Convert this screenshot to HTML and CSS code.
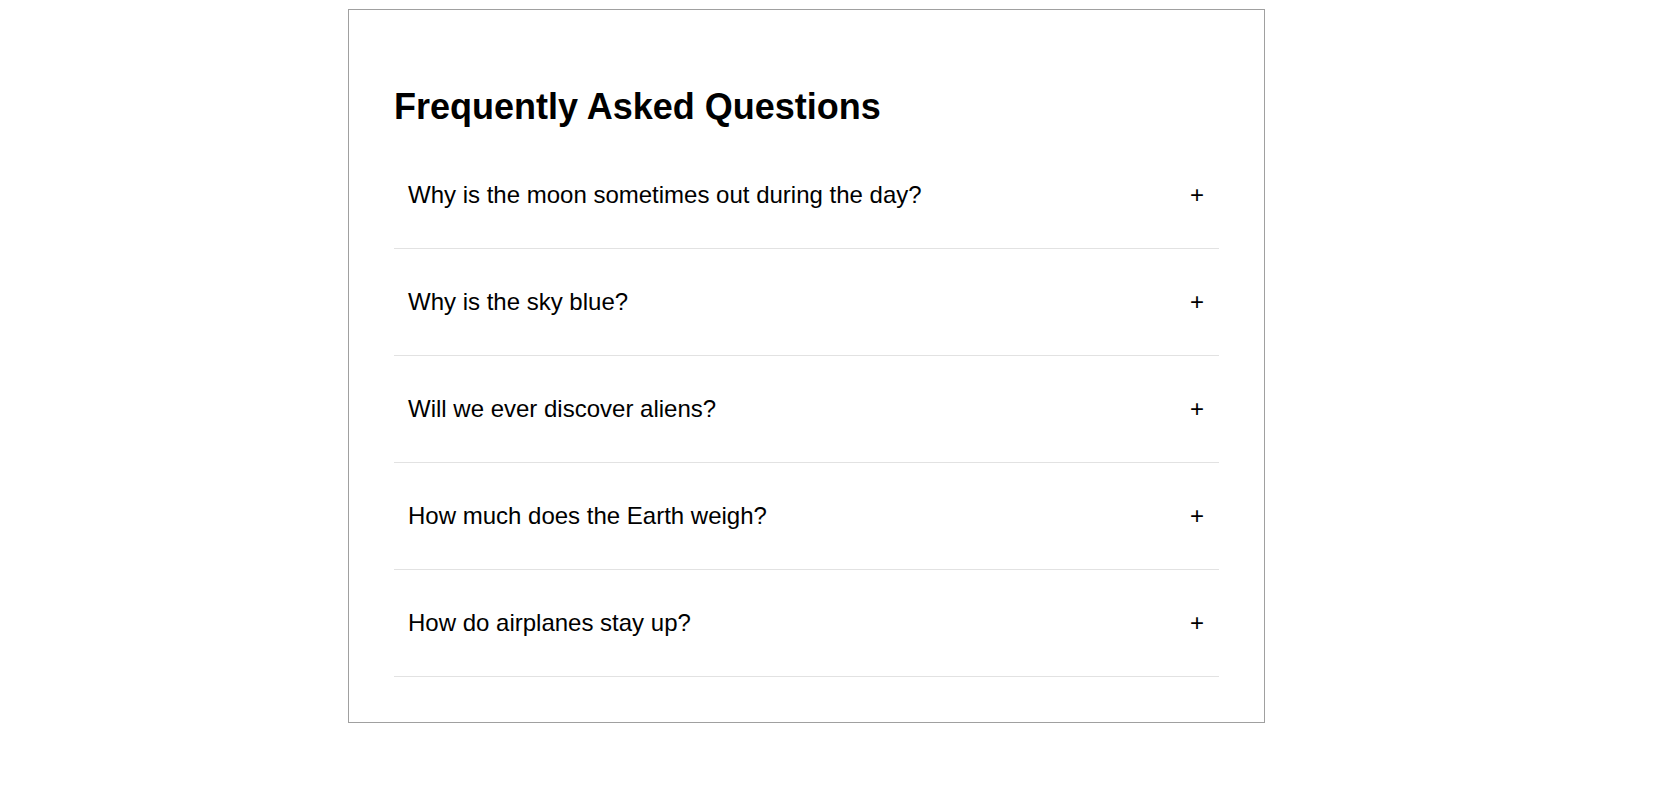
FILE: index.html
```html
<!DOCTYPE html>
<html lang="en">
<head>
<meta charset="utf-8">
<title>FAQ</title>
<link rel="stylesheet" href="styles.css">
</head>
<body>
<div class="page">
  <section class="faq">
    <h1 class="faq-title">Frequently Asked Questions</h1>
    <div class="faq-list">
      <div class="faq-item"><span class="faq-q">Why is the moon sometimes out during the day?</span><span class="faq-icon">+</span></div>
      <div class="faq-item"><span class="faq-q">Why is the sky blue?</span><span class="faq-icon">+</span></div>
      <div class="faq-item"><span class="faq-q">Will we ever discover aliens?</span><span class="faq-icon">+</span></div>
      <div class="faq-item"><span class="faq-q">How much does the Earth weigh?</span><span class="faq-icon">+</span></div>
      <div class="faq-item"><span class="faq-q">How do airplanes stay up?</span><span class="faq-icon">+</span></div>
    </div>
  </section>
</div>
</body>
</html>
```
FILE: styles.css
```css
html, body {
  margin: 0;
  padding: 0;
  background: #ffffff;
}
body {
  font-family: "Liberation Sans", Arial, sans-serif;
  color: #000;
}
.page {
  padding: 9px 0 0 348px;
}
.faq {
  width: 825px;
  padding: 45px;
  border: 1px solid #a0a0a0;
}
.faq-title {
  font-size: 36px;
  font-weight: bold;
  line-height: 41px;
  margin: 31px 0 15px;
}
.faq-list {
  display: flex;
  flex-direction: column;
}
.faq-item {
  display: flex;
  justify-content: space-between;
  align-items: center;
  height: 106px;
  padding: 0 15px 0 14px;
  border-bottom: 1px solid #e2e2e2;
  font-size: 24px;
}
.faq-icon {
  font-size: 24px;
}
```
